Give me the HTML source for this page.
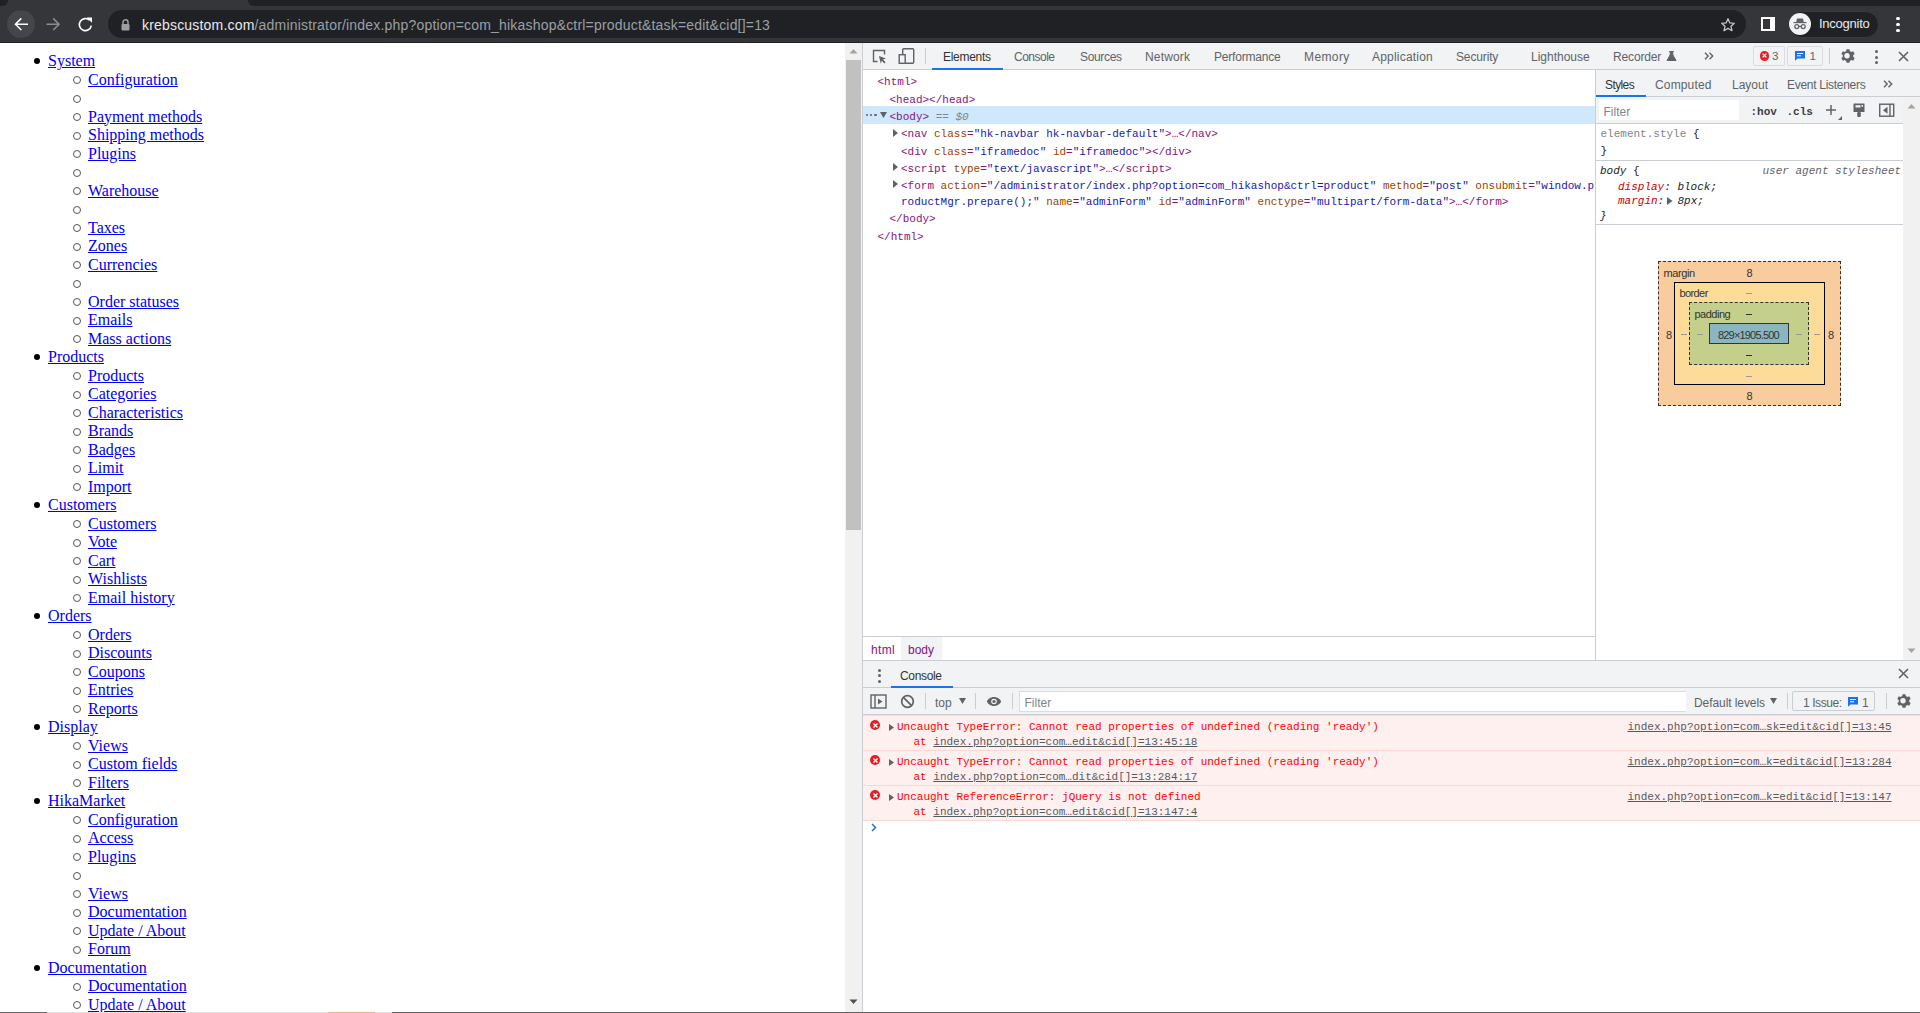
<!DOCTYPE html>
<html><head><meta charset="utf-8">
<style>
*{box-sizing:border-box}
html,body{margin:0;padding:0;width:1920px;height:1013px;overflow:hidden;background:#fff;position:relative}
.a{position:absolute;white-space:nowrap}
#page{position:absolute;left:0;top:43px;width:845px;height:969px;overflow:hidden;background:#fff;font-family:"Liberation Serif",serif;font-size:16px;color:#000}
#page .inner{margin:9px 8px 8px 8px}
#page li{list-style:none;position:relative;min-height:18.5px}
#page li::before{content:'';position:absolute;left:-14px;top:6px;width:6px;height:6px;border-radius:50%;background:#000}
#page li li::before{background:transparent;border:1px solid #555;left:-15px;top:5.5px}
#page ul{margin:0;padding-left:40px;line-height:18.5px}
#page a{color:#0000ee;text-decoration:underline}
</style></head><body>
<div class="a" style="left:0px;top:0px;width:1920px;height:43px;background:#35363a"></div>
<div class="a" style="left:0px;top:42px;width:1920px;height:1px;background:#202124"></div>
<div class="a" style="left:248px;top:0px;width:1672px;height:6px;background:#202124;border-bottom-left-radius:6px"></div>
<div class="a" style="left:0px;top:0px;width:8px;height:6px;background:#202124;border-bottom-right-radius:6px"></div>
<div class="a" style="left:7px;top:10px;width:28px;height:28px;border-radius:50%;background:#45464a"></div>
<svg class="a" style="left:13px;top:16px" width="16" height="16" viewBox="0 0 16 16"><path d="M15 8.2H2.5M8.3 2.4L2.5 8.2l5.8 5.8" stroke="#fff" stroke-width="1.6" fill="none"/></svg>
<svg class="a" style="left:45px;top:16px" width="16" height="16" viewBox="0 0 16 16"><path d="M1.5 8.2H14M8.2 2.4L14 8.2l-5.8 5.8" stroke="#8b8c8f" stroke-width="1.6" fill="none"/></svg>
<svg class="a" style="left:77px;top:16px" width="17" height="17" viewBox="0 0 17 17"><path d="M14.3 9.6A6 6 0 1 1 12.6 4.3" stroke="#fff" stroke-width="1.6" fill="none"/><path d="M9.6 1.4h5.4v5.4z" fill="#fff"/></svg>
<div class="a" style="left:108px;top:10px;width:1638px;height:28px;border-radius:14px;background:#202124"></div>
<svg class="a" style="left:120px;top:18px" width="11" height="13" viewBox="0 0 11 13"><path d="M3 6V4.2a2.5 2.5 0 0 1 5 0V6" stroke="#9aa0a6" stroke-width="1.5" fill="none"/><rect x="1.5" y="6" width="8" height="6.5" rx="1" fill="#9aa0a6"/></svg>
<div class="a " style="left:142px;top:16px;font-family:'Liberation Sans',sans-serif;font-size:14px;line-height:18px;color:#9aa0a6;white-space:nowrap;letter-spacing:0.189px"><span style="color:#e8eaed">krebscustom.com</span>/administrator/index.php?option=com_hikashop&amp;ctrl=product&amp;task=edit&amp;cid[]=13</div>
<svg class="a" style="left:1720px;top:17px" width="16" height="16" viewBox="0 0 16 16"><path d="M8 1.8l1.9 4.1 4.4.4-3.3 3 1 4.4L8 11.4l-4 2.3 1-4.4-3.3-3 4.4-.4z" stroke="#c4c5c7" stroke-width="1.3" fill="none" stroke-linejoin="round"/></svg>
<div class="a" style="left:1761px;top:17px;width:14px;height:14px;border:2px solid #fff;background:linear-gradient(90deg,transparent 0 7px,#fff 7px)"></div>
<div class="a" style="left:1788px;top:11px;width:91px;height:27px;border-radius:14px;background:#202124;border:1px solid #3a3b3f"></div>
<div class="a" style="left:1789px;top:13px;width:22px;height:22px;border-radius:50%;background:#f1f3f4"></div>
<svg class="a" style="left:1791px;top:15px" width="18" height="18" viewBox="0 0 18 18"><path d="M6 3.5h6l.8 3.4H5.2z" fill="#5f6368"/><rect x="2.5" y="7" width="13" height="1.2" fill="#5f6368"/><circle cx="5.8" cy="11.6" r="2" stroke="#5f6368" stroke-width="1.3" fill="none"/><circle cx="12.2" cy="11.6" r="2" stroke="#5f6368" stroke-width="1.3" fill="none"/><path d="M7.8 11.4h2.4" stroke="#5f6368" stroke-width="1.1"/></svg>
<div class="a " style="left:1819px;top:16px;font-family:'Liberation Sans',sans-serif;font-size:13px;line-height:16px;color:#e8eaed;;letter-spacing:-0.250px">Incognito</div>
<div class="a" style="left:1896px;top:16.5px;width:3.5px;height:3.5px;border-radius:50%;background:#fff"></div>
<div class="a" style="left:1896px;top:22.5px;width:3.5px;height:3.5px;border-radius:50%;background:#fff"></div>
<div class="a" style="left:1896px;top:28.5px;width:3.5px;height:3.5px;border-radius:50%;background:#fff"></div>
<div id="page"><div class="inner">
<ul>
<li><a>System</a><ul>
<li><a>Configuration</a></li><li></li><li><a>Payment methods</a></li><li><a>Shipping methods</a></li><li><a>Plugins</a></li><li></li><li><a>Warehouse</a></li><li></li><li><a>Taxes</a></li><li><a>Zones</a></li><li><a>Currencies</a></li><li></li><li><a>Order statuses</a></li><li><a>Emails</a></li><li><a>Mass actions</a></li></ul></li>
<li><a>Products</a><ul>
<li><a>Products</a></li><li><a>Categories</a></li><li><a>Characteristics</a></li><li><a>Brands</a></li><li><a>Badges</a></li><li><a>Limit</a></li><li><a>Import</a></li></ul></li>
<li><a>Customers</a><ul>
<li><a>Customers</a></li><li><a>Vote</a></li><li><a>Cart</a></li><li><a>Wishlists</a></li><li><a>Email history</a></li></ul></li>
<li><a>Orders</a><ul>
<li><a>Orders</a></li><li><a>Discounts</a></li><li><a>Coupons</a></li><li><a>Entries</a></li><li><a>Reports</a></li></ul></li>
<li><a>Display</a><ul>
<li><a>Views</a></li><li><a>Custom fields</a></li><li><a>Filters</a></li></ul></li>
<li><a>HikaMarket</a><ul>
<li><a>Configuration</a></li><li><a>Access</a></li><li><a>Plugins</a></li><li></li><li><a>Views</a></li><li><a>Documentation</a></li><li><a>Update / About</a></li><li><a>Forum</a></li></ul></li>
<li><a>Documentation</a><ul>
<li><a>Documentation</a></li><li><a>Update / About</a></li></ul></li>
</ul>
</div></div>

<div class="a" style="left:845px;top:43px;width:17px;height:970px;background:#f1f1f1"></div>
<div class="a" style="left:846px;top:60px;width:15px;height:470px;background:#c1c1c1"></div>
<svg class="a" style="left:849px;top:48px" width="9" height="6" viewBox="0 0 9 6"><path d="M0.5 5.5L4.5 1 8.5 5.5z" fill="#a3a3a3"/></svg>
<svg class="a" style="left:849px;top:999px" width="9" height="6" viewBox="0 0 9 6"><path d="M0.5 0.5L4.5 5 8.5 0.5z" fill="#505050"/></svg>
<div class="a" style="left:862px;top:43px;width:1058px;height:970px;background:#fff"></div>
<div class="a" style="left:862px;top:43px;width:1px;height:970px;background:#cacdd1"></div>
<div class="a" style="left:863px;top:43px;width:1057px;height:26px;background:#f1f3f4"></div>
<div class="a" style="left:863px;top:69px;width:1057px;height:1px;background:#cacdd1"></div>
<svg class="a" style="left:872px;top:49px" width="15" height="15" viewBox="0 0 15 15"><path d="M5.5 12.5H1.5v-11h11v4" stroke="#5f6368" stroke-width="1.4" fill="none"/><path d="M7 7l7 2.6-3 1 2.6 2.6-1.2 1.2-2.6-2.6-1 3z" fill="#5f6368"/></svg>
<svg class="a" style="left:898px;top:47px" width="17" height="18" viewBox="0 0 17 18"><rect x="4.7" y="1.7" width="11" height="14.6" rx="1" stroke="#5f6368" stroke-width="1.4" fill="none"/><rect x="1.2" y="7.7" width="6" height="8.6" stroke="#5f6368" stroke-width="1.4" fill="#f1f3f4"/></svg>
<div class="a" style="left:925px;top:48px;width:1px;height:16px;background:#cacdd1"></div>
<div class="a tab" style="left:943px;top:50px;font-family:'Liberation Sans',sans-serif;font-size:12px;line-height:14px;color:#333;white-space:nowrap;letter-spacing:-0.286px">Elements</div>
<div class="a tab" style="left:1014px;top:50px;font-family:'Liberation Sans',sans-serif;font-size:12px;line-height:14px;color:#5f6368;white-space:nowrap;letter-spacing:-0.500px">Console</div>
<div class="a tab" style="left:1080px;top:50px;font-family:'Liberation Sans',sans-serif;font-size:12px;line-height:14px;color:#5f6368;white-space:nowrap;letter-spacing:-0.333px">Sources</div>
<div class="a tab" style="left:1145px;top:50px;font-family:'Liberation Sans',sans-serif;font-size:12px;line-height:14px;color:#5f6368;white-space:nowrap;letter-spacing:0.167px">Network</div>
<div class="a tab" style="left:1214px;top:50px;font-family:'Liberation Sans',sans-serif;font-size:12px;line-height:14px;color:#5f6368;white-space:nowrap;letter-spacing:-0.200px">Performance</div>
<div class="a tab" style="left:1304px;top:50px;font-family:'Liberation Sans',sans-serif;font-size:12px;line-height:14px;color:#5f6368;white-space:nowrap;letter-spacing:0.400px">Memory</div>
<div class="a tab" style="left:1372px;top:50px;font-family:'Liberation Sans',sans-serif;font-size:12px;line-height:14px;color:#5f6368;white-space:nowrap;letter-spacing:0.200px">Application</div>
<div class="a tab" style="left:1456px;top:50px;font-family:'Liberation Sans',sans-serif;font-size:12px;line-height:14px;color:#5f6368;white-space:nowrap;letter-spacing:-0.143px">Security</div>
<div class="a tab" style="left:1531px;top:50px;font-family:'Liberation Sans',sans-serif;font-size:12px;line-height:14px;color:#5f6368;white-space:nowrap;letter-spacing:0.000px">Lighthouse</div>
<div class="a tab" style="left:1613px;top:50px;font-family:'Liberation Sans',sans-serif;font-size:12px;line-height:14px;color:#5f6368;white-space:nowrap;letter-spacing:-0.143px">Recorder</div>
<div class="a" style="left:932px;top:68px;width:71px;height:2px;background:#1a73e8"></div>
<svg class="a" style="left:1665.5px;top:50.5px" width="11" height="10" viewBox="0 0 11 10"><path d="M3.2 0.5h4.6M4.2 0.8v3L1 9.5h9L6.8 3.8v-3" fill="#5f6368" stroke="#5f6368" stroke-width="1" stroke-linejoin="round"/></svg>
<svg class="a" style="left:1704px;top:52px" width="10" height="8" viewBox="0 0 10 8"><path d="M1 0.8l3.2 3.2L1 7.2M5.5 0.8l3.2 3.2-3.2 3.2" stroke="#5f6368" stroke-width="1.4" fill="none"/></svg>
<div class="a" style="left:1753px;top:46px;width:32px;height:20px;border:1px solid #dadce0;border-radius:2px;background:#f1f3f4"></div>
<div class="a" style="left:1760px;top:51.2px;width:9.4px;height:9.4px;border-radius:50%;background:#e41e25"></div>
<svg class="a" style="left:1761.2px;top:52.4px" width="7" height="7" viewBox="0 0 7 7"><path d="M1.6 1.6l3.8 3.8M5.4 1.6l-3.8 3.8" stroke="#fff" stroke-width="1.3"/></svg>
<div class="a " style="left:1772px;top:50px;font-family:'Liberation Sans',sans-serif;font-size:11.5px;line-height:13px;color:#5f6368;">3</div>
<div class="a" style="left:1787px;top:46px;width:36px;height:20px;border:1px solid #dadce0;border-radius:2px;background:#f1f3f4"></div>
<svg class="a" style="left:1794px;top:50px" width="12" height="11" viewBox="0 0 12 11"><path d="M1 1h10v7.5H3.5L1 10.8z" fill="#1a73e8"/><path d="M3 3.5h6M3 5.8h4" stroke="#fff" stroke-width="1"/></svg>
<div class="a " style="left:1809.5px;top:50px;font-family:'Liberation Sans',sans-serif;font-size:11.5px;line-height:13px;color:#5f6368;">1</div>
<div class="a" style="left:1829px;top:48px;width:1px;height:16px;background:#cacdd1"></div>
<svg class="a" style="left:1840px;top:48px" width="16" height="16" viewBox="0 0 16 16"><path fill="#5f6368" d="M8 5.3a2.7 2.7 0 1 0 0 5.4 2.7 2.7 0 0 0 0-5.4zm6.2 3.8l1.5 1.2-1.5 2.6-1.8-.7c-.5.4-1 .7-1.6.9L10.5 15h-3l-.3-1.9c-.6-.2-1.1-.5-1.6-.9l-1.8.7-1.5-2.6 1.5-1.2a5 5 0 0 1 0-1.8L2.3 6.1l1.5-2.6 1.8.7c.5-.4 1-.7 1.6-.9L7.5 1.4h3l.3 1.9c.6.2 1.1.5 1.6.9l1.8-.7 1.5 2.6-1.5 1.2a5 5 0 0 1 0 1.8z" transform="translate(-1 -0.2)"/></svg>
<div class="a" style="left:1875px;top:50px;width:3px;height:3px;border-radius:50%;background:#5f6368"></div>
<div class="a" style="left:1875px;top:55.5px;width:3px;height:3px;border-radius:50%;background:#5f6368"></div>
<div class="a" style="left:1875px;top:61px;width:3px;height:3px;border-radius:50%;background:#5f6368"></div>
<svg class="a" style="left:1898px;top:51px" width="11" height="11" viewBox="0 0 11 11"><path d="M1 1l9 9M10 1l-9 9" stroke="#5f6368" stroke-width="1.6"/></svg>
<div class="a" style="left:863px;top:106px;width:732px;height:18px;background:#cfe8fc"></div>
<div class="a " style="left:877.5px;top:75px;font-family:'Liberation Mono',monospace;font-size:11px;line-height:14px;color:#202124;"><span style="color:#881280">&lt;html&gt;</span></div>
<div class="a " style="left:889.5px;top:93px;font-family:'Liberation Mono',monospace;font-size:11px;line-height:14px;color:#202124;"><span style="color:#881280">&lt;head&gt;&lt;/head&gt;</span></div>
<div class="a" style="left:866px;top:114px;width:2.2px;height:2.2px;background:#5f6368;border-radius:50%"></div>
<div class="a" style="left:870.2px;top:114px;width:2.2px;height:2.2px;background:#5f6368;border-radius:50%"></div>
<div class="a" style="left:874.4px;top:114px;width:2.2px;height:2.2px;background:#5f6368;border-radius:50%"></div>
<svg class="a" style="left:880px;top:112px" width="7" height="6" viewBox="0 0 7 6"><path d="M0 0h7L3.5 6z" fill="#5f6368"/></svg>
<div class="a " style="left:889.5px;top:110px;font-family:'Liberation Mono',monospace;font-size:11px;line-height:14px;color:#202124;"><span style="color:#881280">&lt;body&gt;</span> <span style="color:#80868b;font-style:italic">== $0</span></div>
<svg class="a" style="left:893px;top:129px" width="5" height="8" viewBox="0 0 5 8"><path d="M0 0l5 4-5 4z" fill="#5f6368"/></svg>
<div class="a " style="left:901px;top:127px;font-family:'Liberation Mono',monospace;font-size:11px;line-height:14px;color:#202124;white-space:pre"><span style="color:#881280">&lt;nav </span><span style="color:#994500">class</span><span style="color:#881280">=</span><span style="color:#1a1aa6">"hk-navbar hk-navbar-default"</span><span style="color:#881280">&gt;</span><span style="color:#881280">…</span><span style="color:#881280">&lt;/nav&gt;</span></div>
<div class="a " style="left:901px;top:145px;font-family:'Liberation Mono',monospace;font-size:11px;line-height:14px;color:#202124;white-space:pre"><span style="color:#881280">&lt;div </span><span style="color:#994500">class</span><span style="color:#881280">=</span><span style="color:#1a1aa6">"iframedoc"</span> <span style="color:#994500">id</span><span style="color:#881280">=</span><span style="color:#1a1aa6">"iframedoc"</span><span style="color:#881280">&gt;&lt;/div&gt;</span></div>
<svg class="a" style="left:893px;top:163px" width="5" height="8" viewBox="0 0 5 8"><path d="M0 0l5 4-5 4z" fill="#5f6368"/></svg>
<div class="a " style="left:901px;top:162px;font-family:'Liberation Mono',monospace;font-size:11px;line-height:14px;color:#202124;white-space:pre"><span style="color:#881280">&lt;script </span><span style="color:#994500">type</span><span style="color:#881280">=</span><span style="color:#1a1aa6">"text/javascript"</span><span style="color:#881280">&gt;</span><span style="color:#881280">…</span><span style="color:#881280">&lt;/script&gt;</span></div>
<svg class="a" style="left:893px;top:180px" width="5" height="8" viewBox="0 0 5 8"><path d="M0 0l5 4-5 4z" fill="#5f6368"/></svg>
<div class="a " style="left:901px;top:179px;font-family:'Liberation Mono',monospace;font-size:11px;line-height:14px;color:#202124;white-space:pre"><span style="color:#881280">&lt;form </span><span style="color:#994500">action</span><span style="color:#881280">=</span><span style="color:#1a1aa6">"/administrator/index.php?option=com_hikashop&amp;ctrl=product"</span> <span style="color:#994500">method</span><span style="color:#881280">=</span><span style="color:#1a1aa6">"post"</span> <span style="color:#994500">onsubmit</span><span style="color:#881280">=</span><span style="color:#1a1aa6">"window.p</span></div>
<div class="a " style="left:901px;top:195px;font-family:'Liberation Mono',monospace;font-size:11px;line-height:14px;color:#202124;white-space:pre"><span style="color:#1a1aa6">roductMgr.prepare();"</span> <span style="color:#994500">name</span><span style="color:#881280">=</span><span style="color:#1a1aa6">"adminForm"</span> <span style="color:#994500">id</span><span style="color:#881280">=</span><span style="color:#1a1aa6">"adminForm"</span> <span style="color:#994500">enctype</span><span style="color:#881280">=</span><span style="color:#1a1aa6">"multipart/form-data"</span><span style="color:#881280">&gt;</span><span style="color:#881280">…</span><span style="color:#881280">&lt;/form&gt;</span></div>
<div class="a " style="left:889.5px;top:212px;font-family:'Liberation Mono',monospace;font-size:11px;line-height:14px;color:#202124;"><span style="color:#881280">&lt;/body&gt;</span></div>
<div class="a " style="left:877.5px;top:230px;font-family:'Liberation Mono',monospace;font-size:11px;line-height:14px;color:#202124;"><span style="color:#881280">&lt;/html&gt;</span></div>
<div class="a" style="left:863px;top:636px;width:732px;height:1px;background:#cacdd1"></div>
<div class="a" style="left:901px;top:637px;width:41px;height:23px;background:#f1f3f4"></div>
<div class="a " style="left:871px;top:643px;font-family:'Liberation Sans',sans-serif;font-size:12px;line-height:14px;color:#881280;;letter-spacing:0.333px">html</div>
<div class="a " style="left:908px;top:643px;font-family:'Liberation Sans',sans-serif;font-size:12px;line-height:14px;color:#881280;;letter-spacing:0.000px">body</div>
<div class="a" style="left:1595px;top:70px;width:1px;height:590px;background:#cacdd1"></div>
<div class="a" style="left:1596px;top:70px;width:324px;height:27px;background:#f1f3f4"></div>
<div class="a" style="left:1596px;top:96px;width:324px;height:1px;background:#cacdd1"></div>
<div class="a stab" style="left:1605px;top:78px;font-family:'Liberation Sans',sans-serif;font-size:12px;line-height:14px;color:#333;white-space:nowrap;letter-spacing:-0.600px">Styles</div>
<div class="a stab" style="left:1655px;top:78px;font-family:'Liberation Sans',sans-serif;font-size:12px;line-height:14px;color:#5f6368;white-space:nowrap;letter-spacing:0.143px">Computed</div>
<div class="a stab" style="left:1732px;top:78px;font-family:'Liberation Sans',sans-serif;font-size:12px;line-height:14px;color:#5f6368;white-space:nowrap;letter-spacing:0.000px">Layout</div>
<div class="a stab" style="left:1787px;top:78px;font-family:'Liberation Sans',sans-serif;font-size:12px;line-height:14px;color:#5f6368;white-space:nowrap;letter-spacing:-0.286px">Event Listeners</div>
<div class="a" style="left:1596px;top:95px;width:50px;height:2px;background:#1a73e8"></div>
<svg class="a" style="left:1883px;top:79.5px" width="10" height="8" viewBox="0 0 10 8"><path d="M1 0.8l3.2 3.2L1 7.2M5.5 0.8l3.2 3.2-3.2 3.2" stroke="#5f6368" stroke-width="1.4" fill="none"/></svg>
<div class="a" style="left:1596px;top:97px;width:324px;height:26px;background:#f1f3f4"></div>
<div class="a" style="left:1599px;top:100px;width:140px;height:20px;background:#fff"></div>
<div class="a " style="left:1603.5px;top:105px;font-family:'Liberation Sans',sans-serif;font-size:12px;line-height:14px;color:#80868b;">Filter</div>
<div class="a " style="left:1750.5px;top:105px;font-family:'Liberation Mono',monospace;font-size:11px;line-height:14px;color:#3c4043;font-weight:bold">:hov</div>
<div class="a " style="left:1786.5px;top:105px;font-family:'Liberation Mono',monospace;font-size:11px;line-height:14px;color:#3c4043;font-weight:bold">.cls</div>
<svg class="a" style="left:1825px;top:104px" width="12" height="12" viewBox="0 0 12 12"><path d="M6 1v10M1 6h10" stroke="#5f6368" stroke-width="1.5"/></svg>
<svg class="a" style="left:1838px;top:116px" width="4" height="4" viewBox="0 0 4 4"><path d="M4 0v4H0z" fill="#5f6368"/></svg>
<svg class="a" style="left:1852px;top:102px" width="14" height="16" viewBox="0 0 14 16"><path d="M2 1.5h10.5v8.5H1.5V2z" fill="#5f6368"/><path d="M3.5 3.2h5v2.3h-5z" fill="#f1f3f4"/><path d="M9.5 3h1.5v1.8H9.5z" fill="#f1f3f4"/><rect x="5.2" y="10" width="3.6" height="5" rx="1.2" fill="#5f6368"/></svg>
<svg class="a" style="left:1878px;top:103px" width="17" height="15" viewBox="0 0 17 15"><rect x="1.7" y="1.2" width="14" height="12" stroke="#5f6368" stroke-width="1.4" fill="none"/><path d="M12 1v12.5" stroke="#5f6368" stroke-width="1.4"/><path d="M9.5 3.8v7L5 7.3z" fill="#5f6368"/></svg>
<div class="a" style="left:1596px;top:123px;width:307px;height:1px;background:#cacdd1"></div>
<div class="a" style="left:1903px;top:97px;width:17px;height:563px;background:#f1f1f1"></div>
<svg class="a" style="left:1907px;top:103px" width="9" height="6" viewBox="0 0 9 6"><path d="M0.5 5.5L4.5 1 8.5 5.5z" fill="#a3a3a3"/></svg>
<svg class="a" style="left:1907px;top:648px" width="9" height="6" viewBox="0 0 9 6"><path d="M0.5 0.5L4.5 5 8.5 0.5z" fill="#a3a3a3"/></svg>
<div class="a " style="left:1600.5px;top:127px;font-family:'Liberation Mono',monospace;font-size:11px;line-height:14px;color:#202124;white-space:pre"><span style="color:#80868b">element.style</span> {</div>
<div class="a " style="left:1600.5px;top:144px;font-family:'Liberation Mono',monospace;font-size:11px;line-height:14px;color:#202124;">}</div>
<div class="a" style="left:1596px;top:160px;width:307px;height:1px;background:#cacdd1"></div>
<div class="a " style="left:1600px;top:164px;font-family:'Liberation Mono',monospace;font-size:11px;line-height:14px;color:#202124;white-space:pre"><i>body</i> {</div>
<div class="a " style="left:1762.5px;top:164px;font-family:'Liberation Mono',monospace;font-size:11px;line-height:14px;color:#5f6368;white-space:pre"><i>user agent stylesheet</i></div>
<div class="a " style="left:1618px;top:180px;font-family:'Liberation Mono',monospace;font-size:11px;line-height:14px;color:#202124;white-space:pre"><i><span style="color:#c80000">display</span>: block;</i></div>
<div class="a " style="left:1618px;top:194px;font-family:'Liberation Mono',monospace;font-size:11px;line-height:14px;color:#202124;white-space:pre"><i><span style="color:#c80000">margin</span>:</i></div>
<svg class="a" style="left:1667px;top:197px" width="6" height="8" viewBox="0 0 6 8"><path d="M0 0l5.5 4L0 8z" fill="#5f6368"/></svg>
<div class="a " style="left:1677.5px;top:194px;font-family:'Liberation Mono',monospace;font-size:11px;line-height:14px;color:#202124;white-space:pre"><i>8px;</i></div>
<div class="a " style="left:1600px;top:209px;font-family:'Liberation Mono',monospace;font-size:11px;line-height:14px;color:#202124;"><i>}</i></div>
<div class="a" style="left:1596px;top:224px;width:307px;height:1px;background:#cacdd1"></div>
<div class="a" style="left:1658px;top:261px;width:183px;height:145px;background:#f9cc9d;border:1px dashed #333"></div>
<div class="a" style="left:1674px;top:282px;width:151px;height:103px;background:#fddc9a;border:1px solid #000"></div>
<div class="a" style="left:1689px;top:302px;width:120px;height:63px;background:#c3cf8a;border:1px dashed #333"></div>
<div class="a" style="left:1709px;top:323px;width:80px;height:21px;background:#8bb6c0;border:1px solid #333"></div>
<div class="a " style="left:1663.5px;top:267px;font-family:'Liberation Sans',sans-serif;font-size:11px;line-height:13px;color:#202124;color:#333;white-space:nowrap;letter-spacing:-0.400px">margin</div>
<div class="a " style="left:1679.5px;top:287px;font-family:'Liberation Sans',sans-serif;font-size:11px;line-height:13px;color:#202124;color:#333;white-space:nowrap;letter-spacing:-0.600px">border</div>
<div class="a " style="left:1694.5px;top:308px;font-family:'Liberation Sans',sans-serif;font-size:11px;line-height:13px;color:#202124;color:#333;white-space:nowrap;letter-spacing:-0.500px">padding</div>
<div class="a " style="left:1718px;top:329px;font-family:'Liberation Sans',sans-serif;font-size:11px;line-height:13px;color:#202124;color:#333;white-space:nowrap;letter-spacing:-0.818px">829×1905.500</div>
<div class="a " style="left:1746.5px;top:267px;font-family:'Liberation Sans',sans-serif;font-size:11px;line-height:13px;color:#202124;color:#333;white-space:nowrap">8</div>
<div class="a " style="left:1746.5px;top:389.5px;font-family:'Liberation Sans',sans-serif;font-size:11px;line-height:13px;color:#202124;color:#333;white-space:nowrap">8</div>
<div class="a " style="left:1666px;top:329px;font-family:'Liberation Sans',sans-serif;font-size:11px;line-height:13px;color:#202124;color:#333;white-space:nowrap">8</div>
<div class="a " style="left:1828px;top:329px;font-family:'Liberation Sans',sans-serif;font-size:11px;line-height:13px;color:#202124;color:#333;white-space:nowrap">8</div>
<div class="a" style="left:1746px;top:293px;width:6px;height:1px;background:#999"></div>
<div class="a" style="left:1746px;top:314px;width:6px;height:1px;background:#333"></div>
<div class="a" style="left:1746px;top:355px;width:6px;height:1px;background:#333"></div>
<div class="a" style="left:1746px;top:376px;width:6px;height:1px;background:#999"></div>
<div class="a" style="left:1681px;top:334px;width:6px;height:1px;background:#999"></div>
<div class="a" style="left:1697px;top:334px;width:6px;height:1px;background:#999"></div>
<div class="a" style="left:1796px;top:334px;width:6px;height:1px;background:#999"></div>
<div class="a" style="left:1814px;top:334px;width:6px;height:1px;background:#999"></div>
<div class="a" style="left:863px;top:660px;width:1057px;height:1px;background:#cacdd1"></div>
<div class="a" style="left:863px;top:661px;width:1057px;height:26px;background:#f1f3f4"></div>
<div class="a" style="left:863px;top:687px;width:1057px;height:1px;background:#cacdd1"></div>
<div class="a" style="left:878px;top:668.5px;width:3px;height:3px;border-radius:50%;background:#5f6368"></div>
<div class="a" style="left:878px;top:674px;width:3px;height:3px;border-radius:50%;background:#5f6368"></div>
<div class="a" style="left:878px;top:679.5px;width:3px;height:3px;border-radius:50%;background:#5f6368"></div>
<div class="a " style="left:900px;top:669px;font-family:'Liberation Sans',sans-serif;font-size:12px;line-height:14px;color:#333;;letter-spacing:-0.333px">Console</div>
<div class="a" style="left:891px;top:686px;width:62px;height:2px;background:#1a73e8"></div>
<svg class="a" style="left:1898px;top:668px" width="11" height="11" viewBox="0 0 11 11"><path d="M1 1l9 9M10 1l-9 9" stroke="#5f6368" stroke-width="1.6"/></svg>
<div class="a" style="left:863px;top:688px;width:1057px;height:26px;background:#f1f3f4"></div>
<div class="a" style="left:863px;top:714px;width:1057px;height:1px;background:#cacdd1"></div>
<svg class="a" style="left:870px;top:694px" width="17" height="15" viewBox="0 0 17 15"><rect x="1" y="1" width="15" height="13" stroke="#5f6368" stroke-width="1.4" fill="none"/><path d="M5 1v13" stroke="#5f6368" stroke-width="1.4"/><path d="M8 4.5v6l4.5-3z" fill="#5f6368"/></svg>
<svg class="a" style="left:900px;top:694px" width="15" height="15" viewBox="0 0 15 15"><circle cx="7.5" cy="7.5" r="5.8" stroke="#5f6368" stroke-width="1.7" fill="none"/><path d="M3.4 3.4l8.2 8.2" stroke="#5f6368" stroke-width="1.7"/></svg>
<div class="a" style="left:925px;top:693px;width:1px;height:16px;background:#cacdd1"></div>
<div class="a " style="left:935px;top:696px;font-family:'Liberation Sans',sans-serif;font-size:12px;line-height:14px;color:#5f6368;;letter-spacing:0.000px">top</div>
<svg class="a" style="left:959px;top:698px" width="7" height="6" viewBox="0 0 7 6"><path d="M0 0h7L3.5 6z" fill="#5f6368"/></svg>
<div class="a" style="left:975px;top:693px;width:1px;height:16px;background:#cacdd1"></div>
<svg class="a" style="left:986px;top:696px" width="16" height="11" viewBox="0 0 16 11"><path d="M8 1C4.5 1 1.8 3.3 0.8 5.5 1.8 7.7 4.5 10 8 10s6.2-2.3 7.2-4.5C14.2 3.3 11.5 1 8 1z" fill="#5f6368"/><circle cx="8" cy="5.5" r="2.8" fill="#f1f3f4"/><circle cx="8" cy="5.5" r="1.6" fill="#5f6368"/></svg>
<div class="a" style="left:1012px;top:693px;width:1px;height:16px;background:#cacdd1"></div>
<div class="a" style="left:1019px;top:691px;width:667px;height:21px;background:#fff;border:1px solid #dadce0;border-right:none"></div>
<div class="a " style="left:1024.5px;top:696px;font-family:'Liberation Sans',sans-serif;font-size:12px;line-height:14px;color:#80868b;">Filter</div>
<div class="a " style="left:1694px;top:696px;font-family:'Liberation Sans',sans-serif;font-size:12px;line-height:14px;color:#5f6368;white-space:nowrap;letter-spacing:-0.077px">Default levels</div>
<svg class="a" style="left:1770px;top:698px" width="7" height="6" viewBox="0 0 7 6"><path d="M0 0h7L3.5 6z" fill="#5f6368"/></svg>
<div class="a" style="left:1787px;top:693px;width:1px;height:16px;background:#cacdd1"></div>
<div class="a" style="left:1792px;top:691px;width:83px;height:20px;border:1px solid #cacdd1;border-radius:2px"></div>
<div class="a " style="left:1803px;top:696px;font-family:'Liberation Sans',sans-serif;font-size:12px;line-height:14px;color:#5f6368;white-space:nowrap;letter-spacing:-0.429px">1 Issue:</div>
<svg class="a" style="left:1847px;top:696px" width="12" height="11" viewBox="0 0 12 11"><path d="M1 1h10v7.5H3.5L1 10.8z" fill="#1a73e8"/><path d="M3 3.5h6M3 5.8h4" stroke="#fff" stroke-width="1"/></svg>
<div class="a " style="left:1862px;top:696px;font-family:'Liberation Sans',sans-serif;font-size:12px;line-height:14px;color:#5f6368;">1</div>
<div class="a" style="left:1886px;top:693px;width:1px;height:16px;background:#cacdd1"></div>
<svg class="a" style="left:1896px;top:693px" width="16" height="16" viewBox="0 0 16 16"><path fill="#5f6368" d="M8 5.3a2.7 2.7 0 1 0 0 5.4 2.7 2.7 0 0 0 0-5.4zm6.2 3.8l1.5 1.2-1.5 2.6-1.8-.7c-.5.4-1 .7-1.6.9L10.5 15h-3l-.3-1.9c-.6-.2-1.1-.5-1.6-.9l-1.8.7-1.5-2.6 1.5-1.2a5 5 0 0 1 0-1.8L2.3 6.1l1.5-2.6 1.8.7c.5-.4 1-.7 1.6-.9L7.5 1.4h3l.3 1.9c.6.2 1.1.5 1.6.9l1.8-.7 1.5 2.6-1.5 1.2a5 5 0 0 1 0 1.8z" transform="translate(-1 -0.2)"/></svg>
<div class="a" style="left:863px;top:715px;width:1057px;height:35px;background:#fff0f0;border-top:1px solid #ffd6d6"></div>
<div class="a" style="left:870px;top:720px;width:10px;height:10px;border-radius:50%;background:#e41e25"></div>
<svg class="a" style="left:871.5px;top:721.5px" width="7" height="7" viewBox="0 0 7 7"><path d="M1.5 1.5l4 4M5.5 1.5l-4 4" stroke="#fff" stroke-width="1.3"/></svg>
<svg class="a" style="left:889px;top:724px" width="5" height="7" viewBox="0 0 5 7"><path d="M0 0l5 3.5L0 7z" fill="#5f6368"/></svg>
<div class="a " style="left:897px;top:720px;font-family:'Liberation Mono',monospace;font-size:11px;line-height:14px;color:#f00;white-space:pre">Uncaught TypeError: Cannot read properties of undefined (reading &#x27;ready&#x27;)</div>
<div class="a " style="left:913.5px;top:735px;font-family:'Liberation Mono',monospace;font-size:11px;line-height:14px;color:#f00;white-space:pre">at <span style="color:#555a5f;text-decoration:underline">index.php?option=com…edit&amp;cid[]=13:45:18</span></div>
<div class="a " style="left:1627.5px;top:720px;font-family:'Liberation Mono',monospace;font-size:11px;line-height:14px;color:#555a5f;white-space:pre;text-decoration:underline">index.php?option=com…sk=edit&amp;cid[]=13:45</div>
<div class="a" style="left:863px;top:750px;width:1057px;height:35px;background:#fff0f0;border-top:1px solid #ffd6d6"></div>
<div class="a" style="left:870px;top:755px;width:10px;height:10px;border-radius:50%;background:#e41e25"></div>
<svg class="a" style="left:871.5px;top:756.5px" width="7" height="7" viewBox="0 0 7 7"><path d="M1.5 1.5l4 4M5.5 1.5l-4 4" stroke="#fff" stroke-width="1.3"/></svg>
<svg class="a" style="left:889px;top:759px" width="5" height="7" viewBox="0 0 5 7"><path d="M0 0l5 3.5L0 7z" fill="#5f6368"/></svg>
<div class="a " style="left:897px;top:755px;font-family:'Liberation Mono',monospace;font-size:11px;line-height:14px;color:#f00;white-space:pre">Uncaught TypeError: Cannot read properties of undefined (reading &#x27;ready&#x27;)</div>
<div class="a " style="left:913.5px;top:770px;font-family:'Liberation Mono',monospace;font-size:11px;line-height:14px;color:#f00;white-space:pre">at <span style="color:#555a5f;text-decoration:underline">index.php?option=com…dit&amp;cid[]=13:284:17</span></div>
<div class="a " style="left:1627.5px;top:755px;font-family:'Liberation Mono',monospace;font-size:11px;line-height:14px;color:#555a5f;white-space:pre;text-decoration:underline">index.php?option=com…k=edit&amp;cid[]=13:284</div>
<div class="a" style="left:863px;top:785px;width:1057px;height:35px;background:#fff0f0;border-top:1px solid #ffd6d6"></div>
<div class="a" style="left:870px;top:790px;width:10px;height:10px;border-radius:50%;background:#e41e25"></div>
<svg class="a" style="left:871.5px;top:791.5px" width="7" height="7" viewBox="0 0 7 7"><path d="M1.5 1.5l4 4M5.5 1.5l-4 4" stroke="#fff" stroke-width="1.3"/></svg>
<svg class="a" style="left:889px;top:794px" width="5" height="7" viewBox="0 0 5 7"><path d="M0 0l5 3.5L0 7z" fill="#5f6368"/></svg>
<div class="a " style="left:897px;top:790px;font-family:'Liberation Mono',monospace;font-size:11px;line-height:14px;color:#f00;white-space:pre">Uncaught ReferenceError: jQuery is not defined</div>
<div class="a " style="left:913.5px;top:805px;font-family:'Liberation Mono',monospace;font-size:11px;line-height:14px;color:#f00;white-space:pre">at <span style="color:#555a5f;text-decoration:underline">index.php?option=com…edit&amp;cid[]=13:147:4</span></div>
<div class="a " style="left:1627.5px;top:790px;font-family:'Liberation Mono',monospace;font-size:11px;line-height:14px;color:#555a5f;white-space:pre;text-decoration:underline">index.php?option=com…k=edit&amp;cid[]=13:147</div>
<div class="a" style="left:863px;top:820px;width:1057px;height:1px;background:#ffd6d6"></div>
<svg class="a" style="left:871px;top:823px" width="6" height="9" viewBox="0 0 6 9"><path d="M1 1l3.5 3.5L1 8" stroke="#1a73e8" stroke-width="1.5" fill="none"/></svg>
<div class="a" style="left:0px;top:1012px;width:47px;height:1px;background:#666"></div>
<div class="a" style="left:47px;top:1012px;width:345px;height:1px;background:#e3e3e3"></div>
<div class="a" style="left:328px;top:1012px;width:47px;height:1px;background:#e8b48a"></div>
<div class="a" style="left:392px;top:1012px;width:1528px;height:1px;background:#5f5f5f"></div>
</body></html>
